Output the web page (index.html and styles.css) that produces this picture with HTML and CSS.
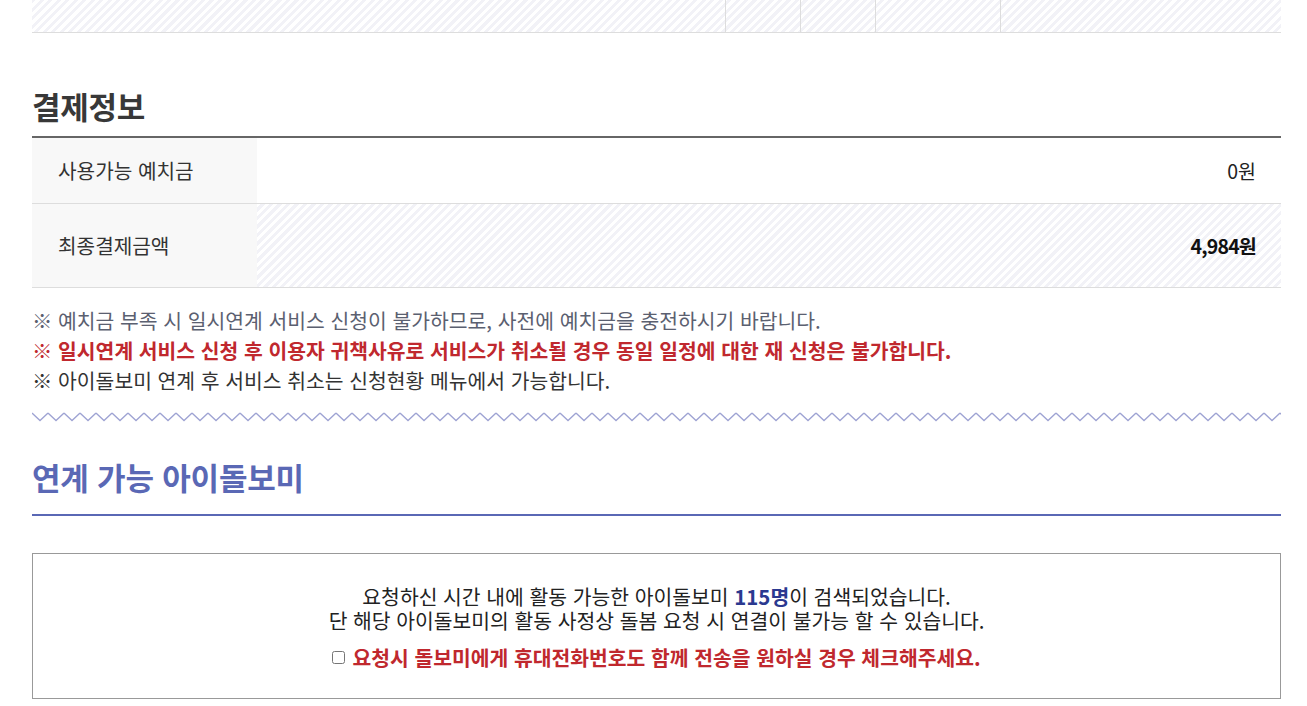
FILE: index.html
```html
<!DOCTYPE html>
<html lang="ko">
<head>
<meta charset="utf-8">
<title>결제정보</title>
<link rel="stylesheet" href="styles.css">
</head>
<body>
<div class="page">
  <div class="prev-table">
    <div class="pcell pc1"></div>
    <div class="pcell pc2"></div>
    <div class="pcell pc3"></div>
    <div class="pcell pc4"></div>
    <div class="pcell pc5"></div>
  </div>

  <h2 class="sec-title">결제정보</h2>
  <div class="pay-table">
    <div class="pay-row row-a">
      <div class="pay-label">사용가능 예치금</div>
      <div class="pay-value">0원</div>
    </div>
    <div class="pay-row row-b">
      <div class="pay-label">최종결제금액</div>
      <div class="pay-value striped strong">4,984원</div>
    </div>
  </div>

  <ul class="notes">
    <li class="note-gray">※ 예치금 부족 시 일시연계 서비스 신청이 불가하므로, 사전에 예치금을 충전하시기 바랍니다.</li>
    <li class="note-red">※ 일시연계 서비스 신청 후 이용자 귀책사유로 서비스가 취소될 경우 동일 일정에 대한 재 신청은 불가합니다.</li>
    <li class="note-dark">※ 아이돌보미 연계 후 서비스 취소는 신청현황 메뉴에서 가능합니다.</li>
  </ul>

  <svg class="zigzag" width="1249" height="12" xmlns="http://www.w3.org/2000/svg">
    <defs>
      <pattern id="zz" x="0" y="0" width="16" height="12" patternUnits="userSpaceOnUse">
        <polyline points="0,2 8,9.5 16,2" fill="none" stroke="#9ea3d3" stroke-width="1.3"/>
      </pattern>
    </defs>
    <rect x="0" y="0" width="1249" height="12" fill="url(#zz)"/>
  </svg>

  <h2 class="sec-title2">연계 가능 아이돌보미</h2>

  <div class="result-box">
    <p class="result-text">요청하신 시간 내에 활동 가능한 아이돌보미 <b class="count">115명</b>이 검색되었습니다.<br>단 해당 아이돌보미의 활동 사정상 돌봄 요청 시 연결이 불가능 할 수 있습니다.</p>
    <label class="phone-check"><input type="checkbox" class="chk"> 요청시 돌보미에게 휴대전화번호도 함께 전송을 원하실 경우 체크해주세요.</label>
  </div>
</div>
</body>
</html>
```

FILE: styles.css
```css
html, body {
  margin: 0;
  padding: 0;
  background: #fff;
}
body {
  font-family: "Noto Sans CJK KR", "Noto Sans", sans-serif;
  color: #333;
}
.page {
  width: 1249px;
  margin-left: 32px;
}
.prev-table {
  display: flex;
  height: 32px;
  border-bottom: 1px solid #dddddd;
  background: repeating-linear-gradient(-45deg, #ffffff 0 3px, #f2f2f7 3px 6px);
}
.pcell {
  border-right: 1px solid #dddddd;
}
.pc1 { width: 693px; }
.pc2 { width: 74px; }
.pc3 { width: 74px; }
.pc4 { width: 124px; }
.pc5 { flex: 1; border-right: 0; }

.sec-title {
  margin: 53px 0 0;
  height: 40px;
  line-height: 40px;
  padding-bottom: 10px;
  font-size: 31px;
  font-weight: 700;
  color: #383838;
  border-bottom: 2px solid #666;
  letter-spacing: -0.3px;
}
.pay-row {
  display: flex;
  border-bottom: 1px solid #dddddd;
}
.row-a { height: 65px; }
.row-b { height: 83px; }
.pay-label {
  width: 199px;
  padding-left: 26px;
  background: #f8f8f8;
  display: flex;
  align-items: center;
  font-size: 20.2px;
  color: #333;
}
.pay-value {
  flex: 1;
  display: flex;
  align-items: center;
  justify-content: flex-end;
  padding-right: 25px;
  font-size: 19.5px;
  color: #222;
}
.striped {
  background: repeating-linear-gradient(-45deg, #ffffff 0 3px, #f2f2f7 3px 6px);
}
.strong {
  font-weight: 700;
  color: #111;
  letter-spacing: -0.8px;
}

.notes {
  list-style: none;
  margin: 17px 0 0;
  padding: 0;
  font-size: 20.4px;
  line-height: 30px;
}
.notes li { white-space: nowrap; }
.note-gray { color: #5b6070; }
.note-red { color: #c0282e; font-weight: 700; }
.note-dark { color: #333; }

.zigzag {
  display: block;
  margin-top: 16px;
}

.sec-title2 {
  margin: 34px 0 0;
  height: 40px;
  line-height: 40px;
  padding-bottom: 17px;
  font-size: 31px;
  font-weight: 700;
  color: #5a68b5;
  border-bottom: 2px solid #5a68b5;
  letter-spacing: -0.2px;
}

.result-box {
  margin-top: 37px;
  border: 1px solid #999;
  padding: 30px 0 29px;
  text-align: center;
}
.result-text {
  margin: 0;
  font-size: 20.4px;
  line-height: 24px;
  color: #222;
}
.count {
  color: #2b3990;
  font-weight: 700;
}
.phone-check {
  display: inline-flex;
  align-items: center;
  gap: 7px;
  margin-top: 13px;
  font-size: 20.4px;
  line-height: 24px;
  font-weight: 700;
  color: #c0282e;
}
.chk {
  width: 13px;
  height: 13px;
  margin: 0;
}
```
